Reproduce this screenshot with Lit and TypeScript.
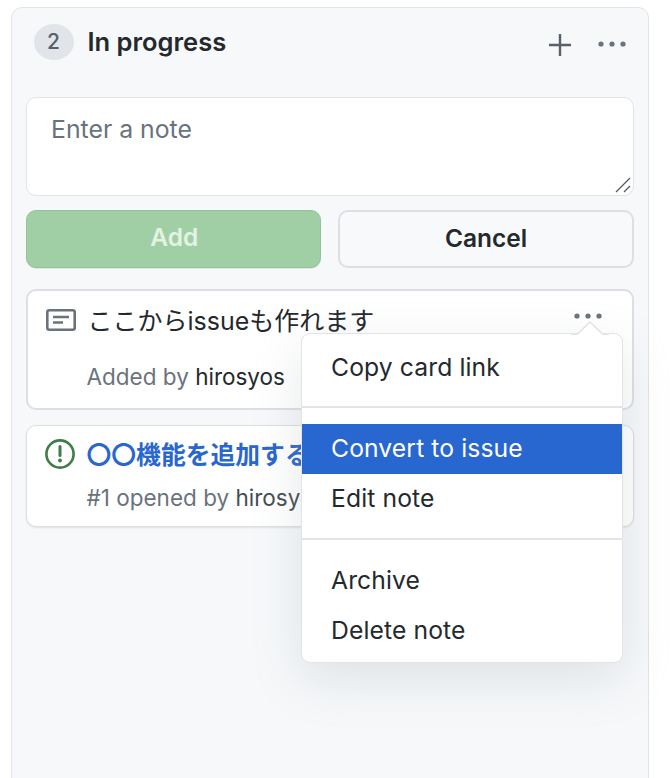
import { LitElement, html, css } from "lit";
import { customElement } from "lit/decorators.js";

@customElement("card-menu")
export class CardMenu extends LitElement {
  static styles = css`
    :host {
      display: block;
      position: absolute;
      left: 273px;
      top: 42px;
      width: 322px;
      height: 330px;
      box-sizing: border-box;
      background: #fff;
      border: 1.5px solid #e1e4e8;
      border-radius: 9px;
      box-shadow: 0 16px 48px rgba(149, 157, 165, 0.24);
      z-index: 5;
      font-size: 24.7px;
      color: #24292e;
    }
    .caret {
      position: absolute;
      top: -13px;
      right: 13px;
      width: 38px;
      height: 14px;
      display: block;
    }
    .section {
      display: flex;
      flex-direction: column;
    }
    .first {
      height: 74.5px;
      padding-top: 9px;
      border-bottom: 2px solid #e1e4e8;
      box-sizing: border-box;
    }
    .second {
      height: 132px;
      padding-top: 16px;
      border-bottom: 2px solid #e1e4e8;
      box-sizing: border-box;
    }
    .third {
      padding-top: 16px;
    }
    .item {
      height: 50px;
      line-height: 48px;
      padding-left: 29.5px;
      letter-spacing: 0.1px;
    }
    .item.active {
      background: #2866d0;
      color: #fff;
    }
  `;

  render() {
    return html`
      <svg class="caret" viewBox="0 0 38 14">
        <path d="M0 13.5h6L19 1l13 12.5h6" fill="#fff" stroke="#e1e4e8" stroke-width="1.5" />
      </svg>
      <div class="section first"><div class="item">Copy card link</div></div>
      <div class="section second">
        <div class="item active">Convert to issue</div>
        <div class="item">Edit note</div>
      </div>
      <div class="section third">
        <div class="item">Archive</div>
        <div class="item">Delete note</div>
      </div>
    `;
  }
}

@customElement("app-root")
export class AppRoot extends LitElement {
  static styles = css`
    :host {
      display: block;
      width: 670px;
      height: 778px;
      overflow: hidden;
      background: #fff;
      font-family: Inter, "Noto Sans CJK JP", sans-serif;
      color: #24292e;
    }
    .column {
      box-sizing: border-box;
      margin: 7px 0 0 11px;
      width: 638px;
      height: 790px;
      padding: 0 14px 0 13.5px;
      background: #f6f8fa;
      border: 1.5px solid #e1e4e8;
      border-radius: 11px;
    }
    .header {
      display: flex;
      align-items: center;
      height: 88.5px;
      padding: 0 7.5px 21px 8px;
      box-sizing: border-box;
    }
    .count {
      width: 40px;
      height: 36px;
      border-radius: 50%;
      background: #e1e4e8;
      color: #586069;
      font-size: 21px;
      font-weight: 500;
      line-height: 36px;
      text-align: center;
    }
    .title {
      margin-left: 14px;
      font-size: 25.5px;
      font-weight: 600;
      flex: 1;
      color: #24292e;
    }
    .actions {
      display: flex;
      align-items: center;
      gap: 25px;
      margin-top: 6px;
    }
    .actions .more {
      margin-bottom: 2px;
    }
    svg {
      display: block;
    }
    .note-box {
      position: relative;
      height: 99px;
      box-sizing: border-box;
      background: #fff;
      border: 1.5px solid #e1e4e8;
      border-radius: 10px;
      padding: 15px 24.5px;
      font-size: 24.8px;
      line-height: 32px;
      color: #6a737d;
    }
    .grip {
      position: absolute;
      right: 2px;
      bottom: 2px;
    }
    .buttons {
      display: flex;
      gap: 17px;
      margin-top: 14px;
    }
    .btn {
      flex: 1;
      height: 58px;
      box-sizing: border-box;
      border-radius: 10px;
      font-size: 24.5px;
      font-weight: 600;
      line-height: 52px;
      text-align: center;
    }
    .btn.add {
      background: #a0cfa5;
      border: 1.5px solid #93c39a;
      color: #e3f2e3;
      box-shadow: 0 1px 0 rgba(27, 31, 35, 0.08);
      padding-left: 2px;
    }
    .btn.cancel {
      background: #f8f9fb;
      border: 2px solid #dcdfe3;
      color: #24292e;
    }
    .card {
      position: relative;
      box-sizing: border-box;
      background: #fff;
      border: 2px solid #dcdfe3;
      border-radius: 10px;
      display: grid;
      grid-template-columns: 30px 1fr;
      column-gap: 12px;
      padding: 0 18px;
    }
    .note {
      margin-top: 21px;
      height: 121px;
    }
    .issue {
      margin-top: 15px;
      height: 102px;
      border-width: 1.5px;
      box-shadow: 0 1px 2px rgba(27, 31, 35, 0.1);
    }
    .note .icon {
      margin-top: 18px;
    }
    .issue .icon {
      margin-top: 13.5px;
    }
    .note-text {
      font-size: 25px;
      line-height: 32px;
      margin-top: 14px;
      color: #24292e;
      white-space: nowrap;
    }
    .dots {
      position: absolute;
      left: 545px;
      top: 21px;
    }
    .meta {
      grid-column: 2;
      font-size: 22.5px;
      color: #6a737d;
      white-space: nowrap;
      overflow: hidden;
    }
    .meta b {
      font-weight: 400;
      color: #444d56;
    }
    .note .meta {
      margin: 10px 0 0 -1px;
      line-height: 30px;
    }
    .note .meta b {
      color: #24292e;
    }
    .issue .meta {
      margin-top: 0;
      line-height: 30px;
    }
    .issue-title {
      font-size: 24.8px;
      font-weight: 600;
      line-height: 32px;
      margin-top: 13px;
      color: #2866d0;
      white-space: nowrap;
      overflow: hidden;
    }
  `;

  private dots(color: string) {
    return html`<svg class="more" width="30" height="8" viewBox="0 0 30 8" fill=${color}>
      <circle cx="4" cy="4" r="2.6" /><circle cx="15" cy="4" r="2.6" /><circle cx="26" cy="4" r="2.6" />
    </svg>`;
  }

  render() {
    return html`
      <div class="column">
        <div class="header">
          <div class="count">2</div>
          <div class="title">In progress</div>
          <div class="actions">
            <svg width="24" height="24" viewBox="0 0 24 24" stroke="#586069" stroke-width="2.4">
              <path d="M12 1v22M1 12h22" />
            </svg>
            ${this.dots("#6a737d")}
          </div>
        </div>

        <div class="note-box">
          Enter a note
          <svg class="grip" width="16" height="16" viewBox="0 0 16 16" stroke="#555" stroke-width="1.2">
            <path d="M1 15L15 1M9 15l6-6" />
          </svg>
        </div>

        <div class="buttons">
          <div class="btn add">Add</div>
          <div class="btn cancel">Cancel</div>
        </div>

        <div class="card note">
          <svg class="icon" width="30" height="22" viewBox="0 0 30 22" fill="none" stroke="#6a737d" stroke-width="2.6">
            <rect x="1.3" y="1.3" width="27.4" height="19.4" rx="2" />
            <path d="M7 8h16M7 13.5h10" />
          </svg>
          <div class="note-text">ここからissueも作れます</div>
          <div class="dots">${this.dots("#6a737d")}</div>
          <div class="meta">Added by <b>hirosyos</b></div>
          <card-menu></card-menu>
        </div>

        <div class="card issue">
          <svg class="icon" width="30" height="30" viewBox="0 0 30 30" fill="none">
            <circle cx="15" cy="15" r="13.6" stroke="#3f7d46" stroke-width="2.6" />
            <path d="M15 7.5v9" stroke="#3f7d46" stroke-width="3" stroke-linecap="round" />
            <circle cx="15" cy="21.5" r="1.9" fill="#3f7d46" />
          </svg>
          <div class="issue-title">〇〇機能を追加する</div>
          <div class="meta">#1 opened by <b>hirosyos</b></div>
        </div>
      </div>
    `;
  }
}
